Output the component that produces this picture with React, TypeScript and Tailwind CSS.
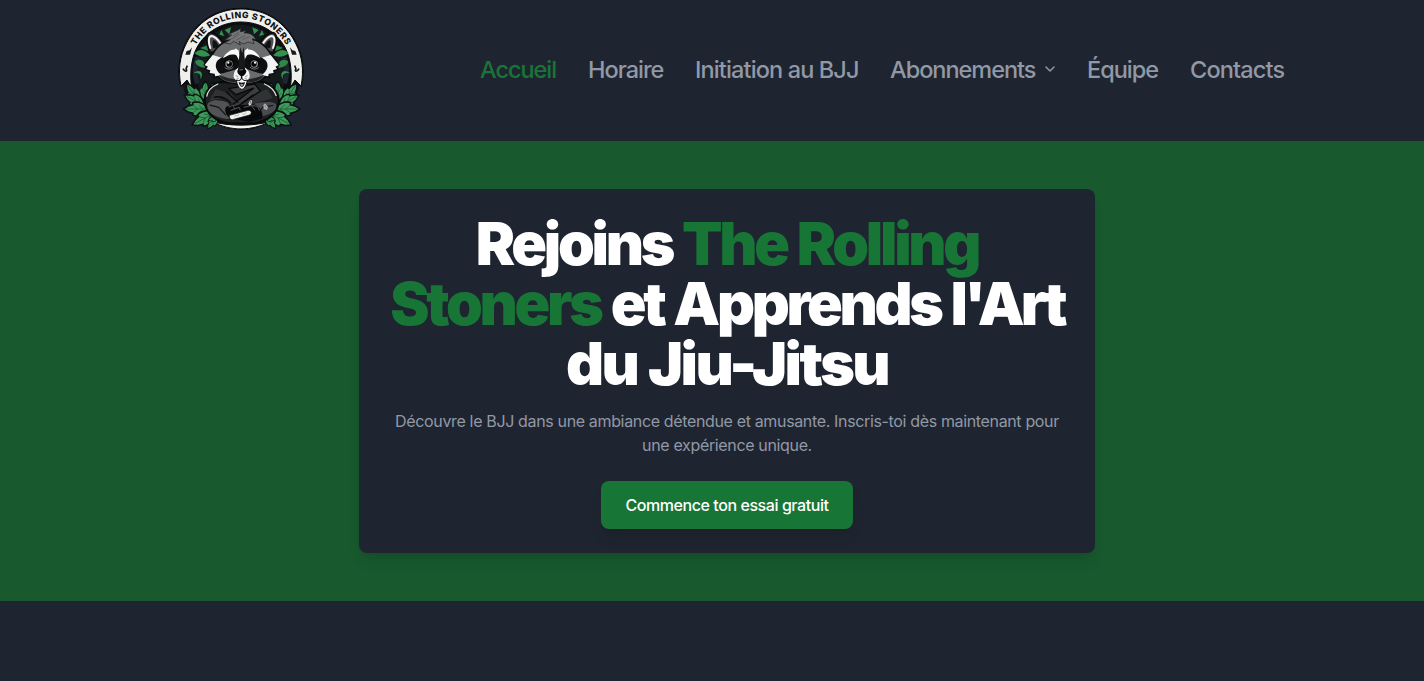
import React from "react";

const leafShape = "M0 0C13 -10 22 -26 16 -42L11 -41L8 -53L0 -66L-8 -53L-11 -41L-16 -42C-22 -26 -13 -10 0 0Z";

function Leaf({ x, y, turn, size = 1 }: { x: number; y: number; turn: number; size?: number }) {
  return (
    <g transform={`translate(${x} ${y}) rotate(${turn}) scale(${size})`}>
      <path d={leafShape} fill="#3c9a5a" stroke="#0c1012" strokeWidth="4" strokeLinejoin="round" />
      <path d="M0 -2V-58M0 -14L10 -26M0 -14L-10 -26M0 -28L9 -40M0 -28L-9 -40" stroke="#1a5530" strokeWidth="1.8" fill="none" />
    </g>
  );
}

function InnerSprigs() {
  return (
    <g>
      <path d="M74 160C90 142 108 152 120 166C104 174 86 170 74 160Z" fill="#35904f" />
      <path d="M75 184C92 172 107 184 104 204C88 202 78 196 75 184Z" fill="#2f8749" />
      <path d="M90 144L112 136L124 156Z" fill="#2f8749" />
      <path d="M70 220C90 202 105 222 90 238C96 222 84 216 70 220Z" fill="#35904f" />
      <path d="M154 90L163 108L148 104Z M164 90L183 82L178 103Z" fill="#35904f" />
    </g>
  );
}

function SideLeaves() {
  return (
    <g>
      <Leaf x={126} y={308} turn={2} size={0.95} />
      <Leaf x={103} y={302} turn={4} size={0.9} />
      <Leaf x={88} y={308} turn={-34} size={1.05} />
      <Leaf x={104} y={318} turn={-62} size={1.05} />
      <Leaf x={116} y={327} turn={-90} size={1.15} />
      <Leaf x={136} y={338} turn={-118} size={1.2} />
      <Leaf x={142} y={346} turn={-144} size={0.75} />
      <Leaf x={146} y={352} turn={-104} size={0.5} />
    </g>
  );
}

function FaceHalf() {
  return (
    <g>
      <path d="M160 128C150 112 134 97 121 98C107 101 108 131 120 158L150 153Z" fill="#4d4d4f" stroke="#0b0c0e" strokeWidth="6" strokeLinejoin="round" />
      <path d="M121 144C113 121 116 108 126 108C137 111 146 122 153 133" fill="none" stroke="#f3f3f1" strokeWidth="6" strokeLinecap="round" />
      <path d="M130 145C126 130 127 120 132 120C139 124 144 132 146 141Z" fill="#101113" />
      <path d="M215 113C177 110 142 134 127 164L103 194L112 199L106 207L119 211L117 220L132 222L132 232L145 230C160 248 188 253 215 250Z" fill="#6b6c6d" stroke="#0b0c0e" strokeWidth="5" strokeLinejoin="round" />
      <path d="M128 165L104 195L114 200L109 207L121 211L119 219L134 221L136 229L149 226L170 208L158 174Z" fill="#f3f3f1" />
      <path d="M213 205C195 208 171 218 151 222C136 209 134 194 142 182C156 168 184 160 200 166C208 178 209 191 213 205Z" fill="#0d0f11" />
      <path d="M158 175C170 154 190 143 205 151C207 158 207 162 204 168C189 156 174 166 158 175Z" fill="#fafaf8" />
      <path d="M193 153L197 145L204 151L210 167L207 181Z" fill="#fafaf8" />
      <circle cx="177" cy="192" r="14" fill="#050607" />
      <circle cx="177" cy="192" r="11" fill="#8c8e8f" />
      <circle cx="178" cy="192" r="8" fill="#050607" />
      <circle cx="175" cy="188" r="3.2" fill="#fff" />
      <path d="M159 190C164 178 183 173 194 185" fill="none" stroke="#050607" strokeWidth="4" />
      <path d="M164 202C171 209 183 209 190 201" fill="none" stroke="#b4b5b4" strokeWidth="2" />
      <path d="M147 226C157 241 176 248 200 246L201 238C181 238 165 231 147 226Z" fill="#202224" />
      <path d="M215 199C198 204 191 215 191 230C195 243 207 246 215 245Z" fill="#f6f6f4" />
      <path d="M197 227L205 230M200 235L206 235" stroke="#67696a" strokeWidth="2" />
    </g>
  );
}

function Logo() {
  return (
    <svg viewBox="0 0 426 423" className="h-[141px] w-[142px] shrink-0" role="img" aria-label="The Rolling Stoners">
      <defs>
        <path id="badge-arc" d="M60 207A153 153 0 0 1 366 207" />
      </defs>
      <circle cx="213" cy="207" r="183" fill="#101519" />
      <path d="M31 262C18 211 27 165 45 130C78 62 141 23 213 23C285 23 348 62 381 130C399 165 408 211 395 262L375 246L359 270L213 300L67 270L51 246Z" fill="#0b0e10" />
      <path d="M33 258C23 211 30 168 48 132C80 66 141 27 213 27C285 27 346 66 378 132C396 168 403 211 393 258L375 240L361 263C367 227 364 178 345 142C319 95 270 66 213 66C156 66 107 95 81 142C62 178 59 227 65 263L51 240Z" fill="#efefec" stroke="#090b0d" strokeWidth="3" />
      <circle cx="213" cy="211" r="137" fill="#14191c" />
      <path d="M82 250Q68 213 83 172" fill="none" stroke="#1e2631" strokeWidth="14" />
      <path d="M344 250Q358 213 343 172" fill="none" stroke="#1e2631" strokeWidth="14" />
      <text fill="#101315" fontSize="26" fontWeight="800" letterSpacing="1.7" className="font-['Inter',sans-serif]">
        <textPath href="#badge-arc" startOffset="50%" textAnchor="middle">THE ROLLING STONERS</textPath>
      </text>
      <path d="M66 142L60 164L46 164L50 153L59 151ZM360 142L366 164L380 164L376 153L367 151Z" fill="#171a1c" />
      <path d="M39 206C45 218 54 214 48 207L52 197M387 206C381 218 372 214 378 207L374 197" fill="none" stroke="#171a1c" strokeWidth="5" />
      <path d="M128 365C179 394 247 394 298 365C250 379 176 379 128 365Z" fill="#f2f2f0" stroke="#090b0d" strokeWidth="3" />

      <InnerSprigs />
      <g transform="translate(430 0) scale(-1 1)"><InnerSprigs /></g>
      <SideLeaves />
      <g transform="translate(430 0) scale(-1 1)"><SideLeaves /></g>

      <path d="M145 247C118 257 100 281 105 309C107 337 133 365 180 370L250 370C294 364 324 340 326 305C328 276 306 255 282 246Z" fill="#1d1f21" stroke="#07090a" strokeWidth="6" />
      <path d="M145 251C124 260 112 276 110 290M282 251C304 260 315 274 319 288" fill="none" stroke="#e1e2e1" strokeWidth="3.5" />
      <path d="M137 267L184 282L210 313L180 310L158 294L118 302Z" fill="#303235" />
      <path d="M291 267L249 285L205 321L247 313L309 294Z" fill="#303235" />
      <path d="M177 266L198 284L252 264L183 318L195 324L271 273L254 252Z" fill="#3c3e41" stroke="#090b0d" strokeWidth="4" />
      <path d="M168 275L205 308M250 284L215 310M131 292Q160 284 183 310" fill="none" stroke="#08090a" strokeWidth="4" />
      <path d="M112 315C118 299 145 297 174 308L192 345L174 357C139 354 110 339 112 315Z" fill="#515355" />
      <path d="M318 313C307 301 270 308 245 313L259 350C290 350 325 335 318 313Z" fill="#494b4d" />
      <path d="M119 315L146 322L168 346M310 316L279 321L259 346" fill="none" stroke="#18191b" strokeWidth="4" />
      <path d="M174 319C164 317 160 340 179 354L239 366L275 356C284 339 266 313 249 313Z" fill="#08090b" />
      <path d="M176 322L189 315L194 327M182 331L208 322L211 331M242 316L262 319L269 332M221 322L244 317L255 331" fill="none" stroke="#55585a" strokeWidth="3" />
      <path d="M178 346L234 331Q243 329 244 338Q244 345 236 346L187 359Q178 360 178 346Z" fill="#f1f1ee" stroke="#070809" strokeWidth="2" />
      <path d="M193 349L198 345L202 349L207 342M217 341L222 344L229 338" fill="none" stroke="#9c9d9b" strokeWidth="2" />
      <path d="M234 311L239 300L248 300L245 314L237 319Z" fill="#e2e3df" stroke="#0b0c0e" strokeWidth="2" />
      <path d="M239 306L242 304L240 312" fill="none" stroke="#424547" strokeWidth="2" />
      <path d="M280 315L285 310L294 320L291 330L281 327Z" fill="#aaaead" />
      <path d="M285 316L288 323" stroke="#66696b" strokeWidth="2" />

      <FaceHalf />
      <g transform="translate(430 0) scale(-1 1)"><FaceHalf /></g>
      <path d="M206 118L225 118L220 180L210 180Z" fill="#6b6c6d" />
      <path d="M211 142L217 160L221 140L225 184L225 211L204 211L206 184Z" fill="#17191b" />
      <path d="M164 129L181 119L164 121L185 105L173 107C187 94 202 94 213 84L211 95L229 92L222 99C242 98 251 106 258 119L247 116L252 131L234 126L220 132L207 124L211 135L191 124L181 132Z" fill="#747576" stroke="#1c1d1f" strokeWidth="2" />
      <path d="M181 119L209 102M198 121L225 107M217 119L239 110M189 108L207 96" stroke="#58595b" strokeWidth="3" />
      <path d="M202 212C204 203 225 203 229 212C229 222 219 229 216 229C210 228 201 220 202 212Z" fill="#050607" />
      <path d="M209 210L218 209" stroke="#707375" strokeWidth="3" strokeLinecap="round" />
      <path d="M199 240Q215 246 215 229Q216 246 232 240C229 259 222 268 215 268C207 266 201 255 199 240Z" fill="#f3f3f1" stroke="#08090a" strokeWidth="3" />
      <path d="M206 246Q215 250 225 246Q222 261 215 261Q209 259 206 246Z" fill="#101214" />
      <path d="M210 254Q215 249 221 254L215 260Z" fill="#8c8e8e" />
    </svg>
  );
}

function NavLink({ children, className }: { children: React.ReactNode; className: string }) {
  return <a href="#" className={`block whitespace-nowrap ${className}`}>{children}</a>;
}

export default function App() {
  return (
    <div className="min-h-[681px] bg-[#1f2530] font-['Inter','Liberation_Sans',sans-serif]">
      <header className="flex h-[141px] items-center justify-between pr-[140px] pl-[170px]">
        <Logo />
        <nav className="flex items-center gap-8 pb-[2px] text-[23.5px] leading-8 font-[450] text-[#9198a6]">
          <NavLink className="w-[76px] tracking-[-1.05px] text-[#177636]">Accueil</NavLink>
          <NavLink className="w-[75px] tracking-[-1px]">Horaire</NavLink>
          <NavLink className="w-[163px] tracking-[-0.87px]">Initiation au BJJ</NavLink>
          <a href="#" className="flex w-[165px] items-center whitespace-nowrap tracking-[-1.02px]">
            <span className="w-[152px] shrink-0">Abonnements</span>
            <svg viewBox="0 0 16 16" className="mb-0.5 size-4 shrink-0" fill="none" stroke="currentColor" strokeWidth="1.5" strokeLinecap="round" strokeLinejoin="round"><path d="m4 6 4 4 4-4" /></svg>
          </a>
          <NavLink className="w-[71px] tracking-[-1px]">Équipe</NavLink>
          <NavLink className="w-[94px] tracking-[-0.85px]">Contacts</NavLink>
        </nav>
      </header>
      <main className="flex h-[460px] justify-center bg-[#18592e] py-12 pl-[30px]">
        <section className="flex h-[364px] w-[736px] flex-col items-center rounded-lg bg-[#1f2530] px-6 pt-[25px] pb-6 text-center shadow-lg">
          <h1 className="w-[688px] text-[59px] leading-[60px] font-[860] tracking-[-3.3px] text-white [word-spacing:1.5px]">
            Rejoins <span className="text-[#177636]">The Rolling<br />Stoners</span> et Apprends <span className="tracking-[-3.8px]">l'Art</span><br /><span className="tracking-[-2.55px]">du Jiu-Jitsu</span>
          </h1>
          <p className="mt-[15px] text-base leading-6 tracking-[-0.35px] whitespace-nowrap text-[#9198a6]">
            Découvre le BJJ dans une ambiance détendue et amusante. Inscris-toi dès maintenant pour<br />une expérience unique.
          </p>
          <a href="#" className="mt-6 flex h-12 w-[252px] shrink-0 items-center justify-center rounded-lg bg-[#177636] text-base font-medium tracking-[-0.43px] text-white shadow-lg">
            Commence ton essai gratuit
          </a>
        </section>
      </main>
    </div>
  );
}
